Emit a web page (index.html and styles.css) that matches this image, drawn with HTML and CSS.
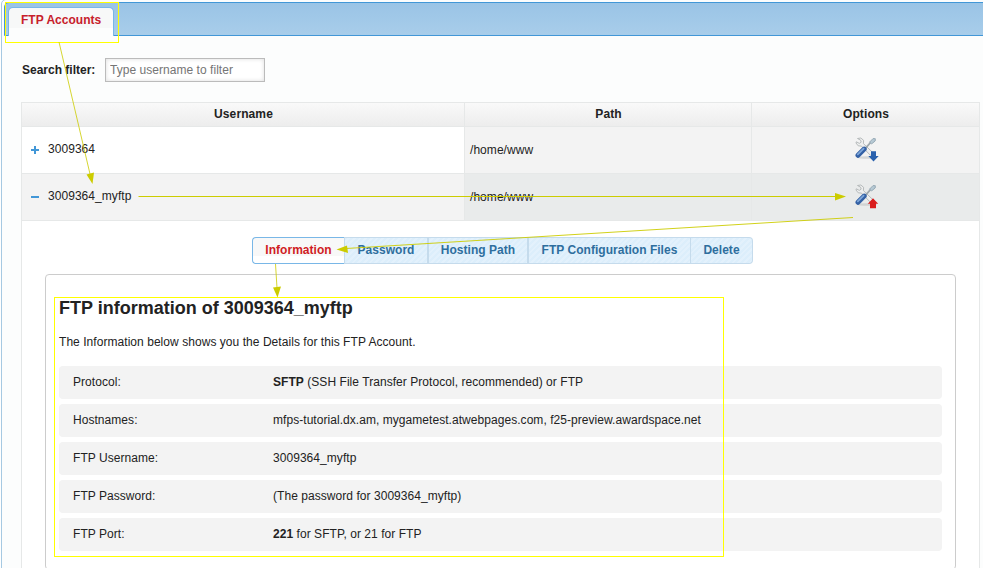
FILE: index.html
```html
<!DOCTYPE html>
<html lang="en">
<head>
<meta charset="utf-8">
<title>FTP Accounts</title>
<link rel="stylesheet" href="styles.css">
</head>
<body>
<svg class="defs" width="0" height="0" aria-hidden="true">
  <defs>
    <g id="tools">
      <ellipse cx="12" cy="20.5" rx="10" ry="1.3" fill="#b8bbbb" opacity=".5"/>
      <path d="M2.500 1.500 5.800 1 8.600 3.300 8.400 6.600 18 15.800 15.500 18.400 6.500 9.100 3.200 8.800 1 6 1.300 4.800 4.300 6.400 6.200 5.100 5.600 3.200z" fill="#eeefef" stroke="#b0b4b6" stroke-width=".9" stroke-linejoin="round"/>
      <path d="M9 12.800 16 5" stroke="#9da6ab" stroke-width="1.800"/>
      <path d="M14.500 5.200 18 1.600 20.300 1.700 20.200 4 16.700 6.800z" fill="#b6c9d4" stroke="#91a5b1" stroke-width=".9" stroke-linejoin="round"/>
      <path d="M3 18.300 9.200 12.100" stroke="#3461a5" stroke-width="5" stroke-linecap="round"/>
      <path d="M2.800 17.400 8.600 11.600" stroke="#7da6d9" stroke-width="1.800" stroke-linecap="round"/>
    </g>
  </defs>
</svg>
<main class="widget">
  <nav class="tabbar"><a class="tab">FTP Accounts</a></nav>
  <div class="content">
    <div class="filter">
      <label for="filter">Search filter:</label>
      <input id="filter" type="text" placeholder="Type username to filter">
    </div>
    <section class="accounts">
      <div class="row head"><div>Username</div><div>Path</div><div>Options</div></div>
      <div class="row">
        <div class="user"><span class="toggle plus"></span>3009364</div>
        <div class="path">/home/www</div>
        <div class="options"><svg width="24" height="26" viewBox="0 0 24 26"><use href="#tools"/><path d="M16 14.200h5v4.800h2.700l-5.200 5.500-5.200-5.500H16z" fill="#2860ad"/></svg></div>
      </div>
      <div class="row open">
        <div class="user"><span class="toggle"></span>3009364_myftp</div>
        <div class="path">/home/www</div>
        <div class="options"><svg width="24" height="26" viewBox="0 0 24 26"><use href="#tools"/><path d="M18 14.200l5.200 5.500H21v4.600h-6v-4.600h-2.200z" fill="#d91c1c"/></svg></div>
      </div>
      <div class="detail">
        <div class="buttons">
          <a class="button active">Information</a><a class="button password">Password</a><a class="button hosting">Hosting Path</a><a class="button config">FTP Configuration Files</a><a class="button delete">Delete</a>
        </div>
        <div class="panel">
          <h1>FTP information of 3009364_myftp</h1>
          <p>The Information below shows you the Details for this FTP Account.</p>
          <dl>
            <div><dt>Protocol:</dt><dd><b>SFTP</b> (SSH File Transfer Protocol, recommended) or FTP</dd></div>
            <div><dt>Hostnames:</dt><dd>mfps-tutorial.dx.am, mygametest.atwebpages.com, f25-preview.awardspace.net</dd></div>
            <div><dt>FTP Username:</dt><dd>3009364_myftp</dd></div>
            <div><dt>FTP Password:</dt><dd>(The password for 3009364_myftp)</dd></div>
            <div><dt>FTP Port:</dt><dd><b>221</b> for SFTP, or 21 for FTP</dd></div>
          </dl>
        </div>
      </div>
    </section>
  </div>
</main>
<svg class="annotations" width="983" height="568" viewBox="0 0 983 568" aria-hidden="true">
  <g fill="none" stroke="#ff0">
    <rect x="5.500" y="2.500" width="113" height="40"/>
    <rect x="54.500" y="297.500" width="669" height="259"/>
  </g>
  <g fill="none" stroke="#cc0">
    <path d="M59 42 90 174" stroke-opacity=".8"/>
    <path d="M138.500 196.500H836"/>
    <path d="M853 217.500 346 248.500" stroke-opacity=".9"/>
    <path d="M275.500 264 277 288" stroke-opacity=".8"/>
  </g>
  <g fill="#cc0">
    <path d="M86.500 174.500 94 172.500 92.500 184z"/>
    <path d="M835 193v7.500L846 196.500z"/>
    <path d="M347 245.500 348 253 336.500 249.500z"/>
    <path d="M273 287.500 281 286.500 277.500 297.500z"/>
  </g>
</svg>
</body>
</html>
```
FILE: styles.css
```css
* { box-sizing: border-box; }
body {
  margin: 0;
  height: 568px;
  overflow: hidden;
  position: relative;
  background: #fff;
  color: #222;
  font: 12px/16px "Liberation Sans", Arial, sans-serif;
  letter-spacing: .05px;
}
.defs { display: block; }
.widget {
  height: 590px;
  margin: -1px -8px 0 1px;
  padding: 2px 0 0 2px;
  border: 1px solid #a6c9e2;
  border-radius: 5px;
  background: #fcfdfd;
}
.tabbar {
  height: 34px;
  padding: 4px 0 0 3px;
  border: 1px solid #4297d7;
  border-radius: 5px;
  border-bottom-left-radius: 0;
  background: linear-gradient(#9ac4e6, #a8cdea);
}
.tab {
  display: block;
  width: 106px;
  height: 29px;
  padding: 4px 0 0 12px;
  border: 1px solid #79b7e7;
  border-bottom: 0;
  border-radius: 5px 5px 0 0;
  background: linear-gradient(#f7f8f8 20px, #fcfdfd 20px);
  color: #c7202b;
  font-weight: bold;
  letter-spacing: .02px;
}
.content { padding: 22px 0 0 17px; }
.filter { display: flex; align-items: center; height: 24px; font-weight: bold; letter-spacing: 0; }
.filter label { width: 84px; padding-left: 1px; }
.filter input {
  width: 160px;
  height: 24px;
  padding: 0 4px 1px;
  border: 1px solid #bbb;
  background: #fff;
  box-shadow: inset 0 0 4px #ddd;
  font: 12px "Liberation Sans", Arial, sans-serif;
  letter-spacing: .04px;
}
.filter input::placeholder { color: #757575; opacity: 1; }
.accounts { width: 959px; margin-top: 20px; border: 1px solid #e6e8e8; background: #fff; }
.row {
  display: grid;
  grid-template-columns: 442px 287px 228px;
  height: 47px;
  border-bottom: 1px solid #e6e8e8;
  background: #f3f3f3;
}
.row > div { display: flex; align-items: center; }
.row > div:not(:first-child) { border-left: 1px solid #e6e8e8; }
.row.head { height: 24px; background: linear-gradient(#f9f9f9, #ededed); font-weight: bold; letter-spacing: .1px; }
.row.head > div { justify-content: center; padding: 0 0 2px 1px; }
.row .user { padding: 0 0 2px 9px; background: #fff; }
.row .path { padding-left: 5px; }
.row .options { justify-content: center; padding-left: 2px; }
.row.head > div { background: none; }
.row.open { background: #e9ebeb; }
.row.open .user { background: #f3f3f3; }
.toggle { width: 8px; height: 8px; margin: 1px 9px 0 0; background: linear-gradient(#4297d7, #4297d7) 0 3px / 8px 2px no-repeat; }
.toggle.plus { background: linear-gradient(#4297d7, #4297d7) 0 3px / 8px 2px no-repeat, linear-gradient(#4297d7, #4297d7) 3px 0 / 2px 8px no-repeat; }
.detail { padding: 16px 24px 0 23px; }
.buttons { display: flex; margin-left: 207px; }
.button {
  height: 27px;
  padding: 4px 0;
  border: 1px solid #c5dbec;
  background: repeating-linear-gradient(135deg, #dceefb 0 2px, #e3f1fc 2px 4px);
  color: #2e6e9e;
  font-weight: bold;
  letter-spacing: .03px;
  text-align: center;
}
.button.active { width: 92px; border-color: #79b7e7; border-right-width: 0; border-radius: 4px 0 0 4px; background: linear-gradient(#f8f8f8 18px, #fff 18px); color: #d01c24; }
.password { width: 84px; }
.hosting { width: 100px; }
.config { width: 163px; }
.delete { width: 62px; border-left: 0; border-radius: 0 4px 4px 0; }
.panel { width: 911px; height: 296px; margin-top: 10px; padding: 23px 13px 0; border: 1px solid #ccc; border-radius: 4px; }
h1 { margin: 0; font-size: 18px; line-height: 20px; letter-spacing: 0; }
p { margin: 16px 0 16px; }
dl { display: grid; gap: 5px; margin: 0; }
dl div { display: flex; height: 33px; padding: 8px 14px; border-radius: 4px; background: #f3f3f3; }
dt { width: 200px; }
dd { margin: 0; }
.annotations { position: absolute; inset: 0; pointer-events: none; }
```
